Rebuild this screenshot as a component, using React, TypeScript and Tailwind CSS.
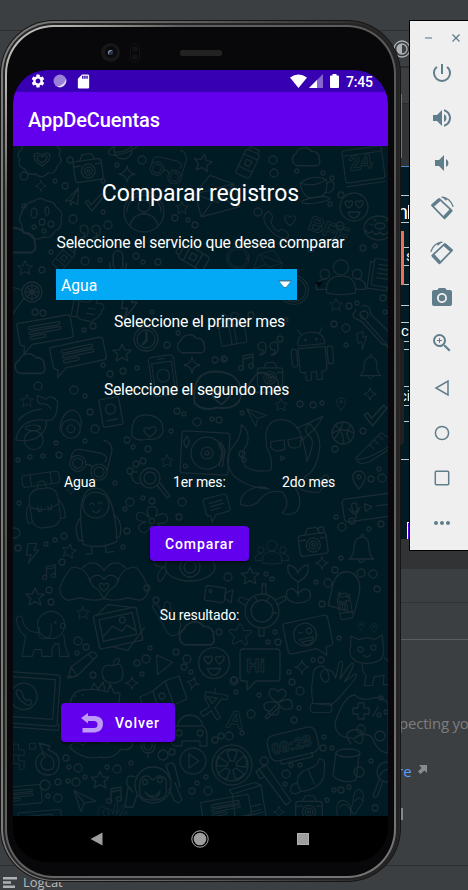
import React from 'react';
import { MdPowerSettingsNew, MdVolumeUp, MdVolumeDown, MdCameraAlt, MdZoomIn, MdMoreHoriz, MdSettings, MdSdCard } from 'react-icons/md';

const shapes: Record<string, React.ReactNode> = {
  star: <path d="M0-9 2.6-3.2 9-2.8 4.2 1.6 5.8 8 0 4.6-5.8 8-4.2 1.6-9-2.8-2.6-3.2Z" />,
  sparkle: <path d="M0-8Q1-1 8 0 1 1 0 8-1 1-8 0-1-1 0-8Z" />,
  heart: <path d="M0 6C-10-1-6-8 0-3 6-8 10-1 0 6Z" />,
  badge: <><path d="M-12-16q6-6 12 0 8-5 12 2 8 2 5 10 5 7-2 11-1 8-9 7-6 7-12 1-9 2-11-5-8-2-5-10-5-6 2-9-1-7 8-7Z" /><path d="M0 7C-13-1-8-10 0-4 8-10 13-1 0 7Z" /><path d="M0 4C-8-1-5-6 0-2 5-6 8-1 0 4Z" /></>,
  camera: <><rect x="-14" y="-9" width="28" height="21" rx="3" /><path d="M-7-9l3-6h9l3 6M-14-4h7M8-4h6" /><circle cy="2" r="7" /><circle cy="2" r="4" /><circle cy="2" r="1.5" /></>,
  planet: <><circle r="9" /><path d="M-8-4C-22 4-12 8 2 3S20-9 8-7M-7 2Q0 3 8-3" /></>,
  glasses: <><circle cx="-8" cy="3" r="8" /><circle cx="14" cy="10" r="8" /><circle cx="-8" cy="3" r="5" /><circle cx="14" cy="10" r="5" /><path d="M0 4q4-2 7 2M-15-2q0-9 8-9l22 2q8 3 4 8M22 7l3-20q-2-9-9-9" /></>,
  plane: <path d="M-9 2 8-10 4 8-1 4-4 8-3 2ZM8-10-3 3" />,
  bigplane: <path d="M-12-9 14-1 2 3 0 13ZM-12-9 2 3" />,
  check: <path d="M-9 0l3-2 3 5L7-8l3 2-12 15Z" />,
  cookie: <><path d="M-8-18q7-5 12 0 8 0 10 6 8 5 5 12 2 9-6 12-4 8-12 6-8 5-13-2-9-2-8-10-5-6 0-12 0-9 12-12Z" /><ellipse cx="-8" cy="-6" rx="3" ry="5" /><ellipse cx="5" cy="-8" rx="2" ry="4" /><circle cy="3" r="3" /><circle cx="9" cy="5" r="3" /><circle cx="-8" cy="8" r="2" /><circle cx="2" cy="12" r="2" /></>,
  person: <><circle r="20" /><circle cy="-6" r="6" /><path d="M-14 13C-10-2 10-2 14 13M-17 0a17 17 0 0 1 34 0" /></>,
  envelope: <><path d="M-22-7 20-7 20 18-22 18ZM-22-7-1 8 20-7M-22 18-6 5M20 18 4 5M-20-9-2-22 18-8" /></>,
  quotes: <><path d="M-2-2a4 4 0 1 0-3 4q0 4-4 5 8 0 7-9ZM10-2a4 4 0 1 0-3 4q0 4-4 5 8 0 7-9Z" /></>,
  cloud: <path d="M-9 7a6 6 0 0 1-1-11A8 8 0 0 1 4-6a6 6 0 0 1 7 7 4 4 0 0 1-2 6Z" />,
  wheel: <><circle r="10" /><circle r="7" /><circle r="2" /><path d="M0-7V7M-7 0H7M-5-5 5 5M5-5-5 5M-10-2-24-6M-8 6-22 26" /></>,
  thumb: <path d="M-11-6h8q7-1 6-9 6-1 5 8h7q5 4 0 7 2 4-2 6 0 4-4 5 0 4-6 3H-6l-5-3ZM-11-6h-6v18h6M0 0h8M0 6h8" />,
  note: <><path d="M-26-11H24q3 0 3 3V9q0 3-3 3H-15l-10 8 2-8q-4 0-4-4V-8q0-3 1-3Z" /><rect x="-16" y="-6" width="32" height="3" rx="1.5" /><rect x="-16" y="-1" width="32" height="3" rx="1.5" /><rect x="-16" y="4" width="16" height="3" rx="1.5" /></>,
  chat: <><path d="M-12-10h22q3 0 3 3V7q0 3-3 3H-4l-6 7v-7q-4 0-4-4V-8Z" /><path d="M-8-4H7M-8 0H7M-8 4H2" /></>,
  clock: <><circle r="12" /><circle r="9" /><path d="M0-7V1l-4 4M1-7V2l-4 4" /></>,
  phone: <><rect x="-14" y="-20" width="28" height="44" rx="4" /><rect x="-11" y="-13" width="22" height="30" /><path d="M-4-17h8" /><circle r="7" cy="2" /></>,
  can: <><rect x="-8" y="-13" width="16" height="28" rx="3" /><path d="M-8-7H8M-8 7H8M-5-13v-4H5v4" /><rect x="-3" y="-3" width="6" height="6" /></>,
  calendar: <><rect x="-22" y="-22" width="44" height="36" rx="3" /><path d="M-22-16h44M-22 18h44" /></>,
  cup: <><path d="M-14-6q14-8 28 0 0 16-9 17H-4q-9-1-10-17ZM14-2q9-4 7 4t-10 5M-14-6q14 7 28 0" /><ellipse cy="14" rx="15" ry="3" /></>,
  smile: <><circle r="14" /><path d="M-5 1C-12-4-8-8-5-5-2-9 1-4-5 1ZM5 1C-1-4 2-8 5-5 9-9 12-4 5 1ZM-6 5H6Q4 11 0 11T-6 5Z" /></>,
  call: <path d="M-12-14q-8 5 1 17t20 12q5-3 1-7-6-5-9-1-8-3-9-12 4-3 0-8-2-3-4-1Z" />,
  donut: <><ellipse rx="15" ry="12" /><ellipse cx="1" cy="-2" rx="5" ry="3" /><path d="M-14 2q4 5 7 1 4 6 8 1 4 5 8 0 3 1 5-3M-9-4l3 1M-5-9l2 2M7-7l2-2M10-1h3" /></>,
  people: <><circle cy="-10" r="8" /><circle cx="-17" cy="-3" r="5" /><circle cx="17" cy="-3" r="5" /><path d="M-15 17Q-17-1 0-1T15 17Q0 20-15 17ZM-16 13h-10q-1-10 10-11M16 13h10q1-10-10-11" /></>,
  book: <><rect x="-10" y="-14" width="22" height="30" rx="2" /><path d="M-10-10h-4v30H8v-4M-5-8H7M-5-3H7M-5 2H7M-5 7H7" /></>,
  ring: <><circle r="16" /><circle r="13" /></>,
  android: <><path d="M-15-8Q-15-22 0-22T15-8ZM-15-5h30V19q0 3-3 3h-3v9h-6v-9h-6v9h-6v-9h-3q-3 0-3-3ZM-10-20l-4-6M10-20l4-6" /><rect x="-23" y="-5" width="6" height="20" rx="3" /><rect x="17" y="-5" width="6" height="20" rx="3" /><circle cx="-6" cy="-14" r="1" /><circle cx="6" cy="-14" r="1" /></>,
  guitar: <><path d="M-18-18q-6 6 0 9 5 1 8 5L8 16l4 1 4 8M-12-22q7-2 8 4 0 5 5 8L20 9M-14-14 15 19" /><circle cx="-10" cy="-13" r="4" /></>,
  music: <><path d="M-4 6V-6l10-2V4M-4-3l10-2" /><circle cx="-6" cy="6" r="2.4" /><circle cx="4" cy="4" r="2.4" /></>,
  bolt: <path d="M-5-10H4L1-3h5L-5 11-2 2h-5Z" />,
  bell: <path d="M-12 9q5-3 5-12Q-6-13 1-13T8-3Q8 6 13 9ZM-3 9q3 7 7 0M0-13q0-4 3-2" />,
  gift: <><rect x="-16" y="-6" width="32" height="24" rx="2" /><path d="M-18-12h36v7h-36ZM-3-12v30M3-12v30M0-12q-14-2-10-8t10 8q2-12 9-8t-9 8" /></>,
  scooter: <><circle cx="-17" cy="16" r="10" /><circle cx="22" cy="4" r="10" /><circle cx="22" cy="4" r="4" /><path d="M-36 16Q-32-8-4-5-2 5-12 12-20 18-36 16ZM10 6Q12-14 24-16 34-12 33 1M-4-5q12 2 12-20M8-25q-8-8-12-2l-9-4q-2 8 4 9 7-1 10 5M-33-5q8-10 24-12" /><ellipse cx="-18" cy="3" rx="8" ry="3" /></>,
  card: <><rect x="-10" y="-14" width="20" height="28" rx="2" /><circle cy="-3" r="5" /><path d="M-5 8H5" /></>,
  helmet: <><path d="M-15 8q-2-22 15-21T16 4q-3 9-16 7-9 3-15-3Z" /><path d="M3 9C-6 3-4-3 2 1 8-5 14 1 3 9Z" /></>,
  turntable: <><rect x="-24" y="-21" width="48" height="42" rx="3" /><circle cx="2" r="16" /><circle cx="2" r="6" /><circle cx="2" r="2" /><path d="M15-12l5 8-2 17M13-10l4 7-2 15M-19-16l3 6-3 6-3-6Z" /><circle cx="-19" cy="14" r="2" /></>,
  backpack: <><rect x="-17" y="-16" width="34" height="46" rx="12" /><rect x="-22" y="-34" width="44" height="14" rx="4" /><path d="M-12-34v14M12-34v14M-5-16q-1-9 5-9t5 9M-17 4q17 10 34 0M-8 4v6h4V5M8 4v6h-4V5M-17 0q-7 5-5 22h5M17 0q7 5 5 22h-5" /></>,
  penguin: <><path d="M-16 25Q-20-30 0-30T18 25Q0 32-16 25Z" /><circle cy="-13" r="13" /><path d="M-6-14q2-3 4 0M2-14q2-3 4 0M-4-8q4 5 8 0M-16-2q-9 8-4 23h4M17-2q9 8 4 23h-4M-8 28v7h-6M6 28v7h8" /></>,
  magnifier: <><circle r="10" /><circle r="6" /><path d="M7 7 17 20l3-2L10 5M-13-6q-8-1-5 6t10 5" /><circle cx="-14" cy="-14" r="3" /><circle cx="-20" cy="-7" r="3" /><circle cx="-7" cy="-17" r="3" /></>,
  flower: <><path d="M-3-4q-6-12 3-12t4 11q11-7 13 1t-11 6q8 9 1 13T-1 5q-6 12-12 6t6-10q-13-1-10-8t14 3Z" /><circle r="3" /></>,
  hands: <><path d="M0-3q-7-9-15 0 0 7 9 12L0 18M0-3q7-9 15 0 0 7-9 12L0 18M-15 0q-5-17-20-16-9 10-13 22 0 12 9 14l14-3q12 5 25 1M15 0q5-17 20-16 9 10 13 22 0 12-9 14l-14-3q-12 5-25 1M-24-15q14-13 24 3M24-15Q10-28 0-12" /><path d="M0 10C-8 4-5-1 0 3 5-1 8 4 0 10Z" /></>,
  ufo: <><ellipse rx="25" ry="14" /><circle r="10" /><circle r="6" /><path d="M-24-4q-10-12-12-4t10 8q-8 5-6 12t9-8" /></>,
  video: <><rect x="-13" y="-8" width="20" height="15" rx="2" /><path d="M7-3l7-4V6L7 2Z" /><circle cx="-8" cy="-3" r="1.5" /></>,
  pin: <><path d="M0 9Q-8-1-6-5T0-9 6-5 0 9Z" /><circle cy="-3" r="2" /></>,
  octopus: <path d="M-19-8q-5-28 12-30t24 16q5 15 6 28 9-20 4-26-10-8-1-14 15 14 9 34-4 18-15 22 12 8 22-2 10 0-6 18-14 2-28-8 12 14 5 28-8 6-16 2 10-10 0-22-13-3-22 6-8 12-22 7 0-12 11-16 10-5 20 0-22-1-38-14-13-17 0-32 8-9 8-22 10 7 6 21-9 12-2 23 11 7 27 4 3-11-4-23ZM-15-15l14-2 1 10q-11 4-15-2ZM3-17l14-3-1 10q-8 4-12-1ZM16-15Q35-30 40-42 26-35 12-29M-5 0l5 2-4 3Z" />,
  ball: <><circle r="11" /><path d="M-11 0Q0-6 11 0M-8-8Q2 0 0 11M0-11Q-3 0-9 6M8-8Q0 2 8 8" /></>,
  shoe: <><path d="M-20 12 8-16q9 8 14 5l5 7L-6 17q-13 4-14-5ZM-18 14Q-7 14 26-6M-5-3l5 5M0-8l5 5M5-13l5 5" /></>,
  voice: <><rect x="-26" y="-11" width="60" height="23" rx="4" /><rect x="-17" y="-6" width="5" height="9" rx="2" /><path d="M-20-1q5 12 11 0M-14 5v4M-4-4v8l7-4ZM8 0h20" /></>,
  plant: <path d="M0-1Q-12-8-10-18-2-17 0-10 2-17 10-18 12-7 0-1ZM0-1v14M0 20q-14-1-11-12 5-6 11 3 7-9 12-2 3 10-12 11Z" />,
  ice: <><path d="M-15-8q3-14 15-13 13 3 12 22l-2 18-27-4ZM4-20q10 8 8 20" /><path d="M-9 0l4 2-4 2M3 1 0 3l3 2M-7 8q5 6 8 1M-5 11v6h5v-6" /></>,
  turtle: <><circle r="17" /><circle r="11" /><path d="M-16-5l-8-5 2-4 10 3M0-17v-10h4v10M13-11l10-4 1 4-9 5M-3 17v8h5v-8M-7-14l3 5M7-14 4-9M15 2H10" /></>,
  dog: <><circle cx="6" cy="-13" r="16" /><path d="M-7-11q-5 14 5 14T6-14M-9-4Q-26-4-28-22q-5-4-7 2 2 15 11 20l-4 24h12l2-8h9v8H7v-9l4-6h4l1 15h11l-5-14-1-12" /><circle cx="11" cy="-16" r="1" /><circle cx="20" cy="-12" r="3" /></>,
  picture: <><rect x="-22" y="-17" width="44" height="34" rx="2" /><rect x="-17" y="-12" width="34" height="22" /><path d="M-17 6-5-3 3 4 9-1 17 6M-18-17-5-25 22-16M-10 17 5 24 26 5" /><circle cx="6" cy="-7" r="3" /></>,
  peace: <path d="M-13 5q-7-13-13-22 3-6 8 0l7 14q-2-20 4-20t4 22Q7-3 9 3t-3 14Q-4 26-13 5Z" />,
  pencil: <path d="M-16 13l3-11L7-13q4-1 6 4L-7 11ZM-13 2l6 9M4-11l6 6M-16 13l3-2" />,
  apple: <path d="M0-7Q-12-10-12 1T0 12Q12 12 11 0T0-7Q0-15 7-15 8-8 0-7" />,
  play: <path d="M-6-10 12-2-5 12Z" />,
  laptop: <><rect x="-32" y="-28" width="58" height="54" rx="3" /><rect x="-37" y="-23" width="58" height="42" /><circle cx="-11" cy="-3" r="14" /><path d="M-18-9q-4 3 4 10t11 4q2-4-2-5l-3 1q-4-2-4-6Q-15-11-18-9ZM-32 30H28V23" /></>,
  map: <><path d="M-22 0-9-6 3-16 17-21 25 2 12 8-1 18-15 23ZM-9-6l7 22M3-16l9 24" /><circle cy="-1" r="3" /></>,
  dino: <path d="M-21 9Q-20-6-8-7q14-2 25 2l2-8 4 9 6 0-1 10 3 8M-16-1h1M-9-2h1M0-8l3-6 4 6 5-7 2 8" />,
  translate: <path d="M-13-14h25v5H6L0 2l8 9-3 4-8-9-8 8-4-4 9-8-7-9h6l3 5 5-7h-14ZM-3-20v6" />,
  car: <><path d="M-17 6q0-9 6-10 3-11 13-11T15-4q4 2 4 12v8h-7v-5h-18v5h-7l-4-3ZM-10-4h24" /><circle cx="-9" cy="3" r="3" /><circle cx="12" cy="3" r="3" /></>,
  whale: <path d="M-30-3q2-9 13-3 6-8 16-4t12 0q13-9 22 4-5 7-12 4-7 11-22 8-14 4-29-9Z" />,
  refresh: <path d="M-5-9l-4-9 11 3-2 4q12 3 11 14T0 14-12 5-6-8l3 4Q-8-1-7 4t7 5 6-6-5-8Z" />,
  orange: <><circle r="20" /><circle r="16" /><path d="M-2-4-5-13Q0-17 5-13L2-4ZM4-2 12-9Q16-4 14 2L5 1ZM4 3l8 6Q8 14 3 14L1 5ZM-2 5l-3 9q-7-1-9-6l8-5ZM-4-2l-9-6q-3 5-2 9l10 0Z" /></>,
  playc: <><circle r="13" /><path d="M-4-7 6 0-4 7Z" /></>,
  monkey: <><circle r="18" /><path d="M-13 4Q-15-10-5-9L0-5 5-9q10-1 8 11 3 13-13 13T-13 4ZM-8 7q8 9 15-1-2 8-7 7T-8 7ZM-18-8q-10-4-8 8l6 7M-25 3l-3 19h8l4-12M18-5l-5-15q7-5 9 2l5 20M22-2l7 17q-3 5-8 0l-5-11" /><circle cx="-8" cy="-3" r="2.5" /><circle cx="7" cy="-5" r="2.5" /></>,
  mic: <><rect x="-4" y="-11" width="8" height="16" rx="4" /><path d="M-7-1q0 9 7 9t7-9M0 8v5" /></>,
  starfish: <path d="M-2-11q3-2 5 8l10 0q2 3-7 7l2 10q-3 3-8-5l-9 5q-4-1 1-9l-7-7q0-4 9-1Z" />,
  chatsmile: <><path d="M-21-17H20q4 0 4 4V12q0 4-4 4h-4l-1 9-9-9H-20q-4 0-4-4V-13q0-4 3-4Z" /><circle r="12" cx="-3" cy="-1" /><path d="M-10 3H5q-2 7-7 7t-8-7M-9-4h4M-7 6H3" /><circle cx="2" cy="-4" r="3" /></>,
  bubble: <path d="M-17-16h34q3 0 3 3V13q0 3-3 3H-4l-9 9v-9h-4q-3 0-3-3V-13q0-3 3-3Z" />,
  hand: <path d="M-20 15q-3-16 0-29-1-9 6-12 10-3 12 13-3 8-8 1T-6-23q10 1 11 10l4-18q4-3 4 2L10-12q7-11 13-18 6-1-8 21l12-9q5 1-10 17Q10 9 0 17ZM-21 15h19q3 0 3 5t-3 5h-18q-3 0-3-5t2-5Z" />,
  cat: <><path d="M-18-9v-11l9 4q10-4 18 0l8-5 1 12q3 15-9 18-17 4-25-4-5-6-2-14ZM-5 10q-1 11 4 14l-2 11h9l2-10q8 0 11-2l-1 11h9V11L19 4" /><circle cx="-7" cy="-5" r="3" /><circle cx="7" cy="-7" r="3" /><path d="M-4 1q4 5 8 0" /></>,
  clover: <path d="M0 0Q-13-8-7-14-2-15 0-11 4-17 8-11 9-7 0 0 12-7 14 0t-4 6Q4 8 0 0q3 13-4 12-6 0-5-4-6-1-5-6 3-5 14-2ZM-2 2-13 14l2 2L2 3" />,
  gamepad: <><path d="M-26 5q9-28 20-28 8 7 18 3 9-2 15 5v50q-11-1-16-16-9-6-17 1-20 1-20-15Z" /><path d="M-3-15h6v5h5v6H3v5h-6v-5h-5v-6h5ZM12-2l5-9" /><circle cy="11" r="4" /><circle cx="19" cy="18" r="5" /></>,
  alarm: <><rect x="-25" y="-13" width="50" height="26" rx="7" /><path d="M-16 13v4h32v-4" /></>,
  mug: <><path d="M-12-14l-3 24q10 9 23 4l3-25" /><ellipse cy="-13" rx="12" ry="4" /><circle cx="11" cy="6" r="5" /><path d="M3-22q-9-12 2-14t10 8-9 2" /></>,
  croissant: <path d="M-20 15q-2-9 7-9-1-12 12-16 11-3 12-11 8-1 6 10 1 13-7 19T-9 15q-8 5-11 0ZM-13 6-9 15M-1-10 6 7M11-21" />,
  brush: <path d="M-15-18l7-4L17 14l-5 4ZM-15-18l-3 3 4 7 4-2M-10-20l-2-3" />,
  notebook: <><path d="M-22-12 10-22 16 16-18 20ZM-22-12l-3-5 28-8 7 3M-2 2 10-1M-12 14 12 8M-2 8 10 5" /></>,
  lolly: <><circle r="10" /><path d="M-7 4q2-8 14-7M-8 8-14 24q3 3 5-1l5-14" /></>,
  flip: <path d="M-18 20q-4-23 8-22 10 2 8 22ZM-16 8q7-10 12 0M8-16q9 2 5 17L4 15q-8-1-3-14 1-16 7-17ZM3-1q7-8 11 0" />,
  steps: <path d="M-20-9v-8h8v8h8v8h-8v8h8v12h-7v-8h-9V-1h8M4-18H12v8H4Z" />,
};

type Item = [string, number, number, number?, number?];
const items: Item[] = [
  ['badge', 42, 159], ['camera', 88, 169, 1, -8], ['planet', 123, 150], ['glasses', 164, 167, .85, 8], ['star', 203, 163, 1, 10], ['sparkle', 127, 174], ['sparkle', 41, 186, .7], ['plane', 73, 198, .9, -10], ['check', 94, 202], ['cookie', 42, 219], ['person', 144, 212], ['envelope', 217, 195, .95, -15], ['star', 182, 208, .7], ['quotes', 90, 231], ['cloud', 18, 242, 1.5], ['star', 25, 268, .8], ['wheel', 32, 292], ['thumb', 88, 308, .9, 10], ['note', 45, 330, 1, -10], ['note', 78, 353, 1, -12], ['clock', 146, 339], ['star', 122, 353], ['cloud', 192, 345, 1.1], ['cloud', 31, 365, 1.2], ['phone', 163, 374, .9, -8], ['sparkle', 192, 365], ['can', 64, 258, .8, 40], ['can', 193, 257, 1, -60], ['mic', 118, 264, 1.2], ['bolt', 130, 306, 1.2],
  ['can', 248, 163, .95, 25], ['cloud', 307, 158, 1.1], ['calendar', 364, 168, .9, -8], ['cup', 314, 187, .95, -8], ['smile', 354, 207], ['call', 278, 225, .9], ['heart', 290, 220, .9], ['donut', 379, 228], ['people', 341, 277, .95], ['book', 382, 272, .9, 8], ['ring', 294, 290, .9], ['android', 312, 352, .9, -5], ['guitar', 374, 328], ['quotes', 268, 348], ['music', 247, 362], ['star', 336, 305, .7], ['bolt', 363, 340, .8, -20], ['bell', 370, 368, .85], ['gift', 232, 330, .8, -10], ['ring', 238, 258, .7], ['envelope', 270, 263, .6, 20], ['camera', 270, 376, .9],
  ['star', 27, 401, .7], ['scooter', 50, 425, .95], ['card', 111, 412, 1, -10], ['helmet', 147, 428], ['turntable', 205, 453, 1, 3], ['glasses', 86, 461, 1, 5], ['backpack', 44, 502, .85, -8], ['penguin', 97, 518, 1, -5], ['magnifier', 150, 478], ['star', 167, 461, .7], ['flower', 152, 521, .9], ['chat', 217, 505, .9, -15], ['star', 69, 551, .8, 12], ['bolt', 33, 553, .95], ['music', 50, 572, .9], ['hands', 104, 582, .92], ['ufo', 190, 567], ['star', 35, 597], ['video', 218, 595, 1, 8], ['helmet', 217, 391, 1.5], ['cloud', 265, 384, 1.2],
  ['bigplane', 256, 416, .8], ['star', 281, 405, .7], ['sparkle', 370, 394, .8], ['pin', 341, 404, .7], ['octopus', 285, 456, .95], ['ball', 343, 433], ['shoe', 374, 447, .9], ['check', 375, 415, 1.2], ['pin', 359, 480], ['voice', 369, 507, 1, -8], ['camera', 313, 543, 1, -8], ['people', 272, 552, .65], ['bell', 361, 550], ['sparkle', 322, 563, .8], ['star', 250, 576], ['plant', 298, 583], ['ice', 347, 593, 1, 8], ['turtle', 262, 611], ['sparkle', 71, 490, .6],
  ['dog', 46, 636, .85], ['star', 83, 613, .7], ['picture', 118, 628, 1, -12], ['peace', 173, 620, .8], ['pencil', 84, 665], ['apple', 113, 672, .9], ['play', 162, 664, .9], ['smile', 214, 663, 1.1], ['laptop', 34, 700, .95, 4], ['sparkle', 132, 683, .8], ['sparkle', 193, 683, .8, 15], ['map', 162, 697], ['dino', 91, 697], ['translate', 215, 706, .9, 10], ['car', 188, 730], ['whale', 100, 751], ['refresh', 48, 761], ['orange', 232, 765], ['playc', 193, 761], ['star', 100, 780], ['bigplane', 83, 800, .9, 10], ['monkey', 153, 785], ['mic', 148, 745], ['music', 115, 795], ['steps', 27, 756, .7], ['note', 20, 795, .8, -5], ['note', 40, 820, .8, -5], ['note', 226, 808, .9, -10], ['cloud', 198, 635, 1.4], ['hand', 110, 822, .6],
  ['starfish', 241, 633, .8], ['chatsmile', 308, 635, .95, -12], ['bubble', 260, 665], ['sparkle', 302, 667, .9], ['hand', 331, 690, .9], ['cat', 367, 654, .9], ['clover', 278, 703], ['gamepad', 361, 718], ['alarm', 293, 744, 1, -14], ['mug', 348, 766], ['croissant', 309, 778, .9], ['brush', 274, 787], ['notebook', 252, 805, .9], ['lolly', 387, 772], ['flip', 352, 802, .8], ['camera', 309, 810, .95], ['sparkle', 279, 812, .7], ['pin', 361, 626, .5], ['pin', 374, 628, .5], ['can', 345, 607, .8, -10],
];

const dots: [number, number, number][] = [
  [70, 160, 3], [24, 176, 4], [55, 181, 2], [65, 186, 3], [103, 181, 2], [142, 160, 4], [117, 165, 2], [73, 219, 4], [108, 225, 4], [103, 212, 2], [175, 218, 3], [188, 220, 2], [195, 225, 3], [24, 206, 2], [42, 270, 3], [51, 252, 2], [85, 261, 4], [100, 260, 2], [136, 256, 3], [143, 262, 2], [158, 262, 3], [35, 312, 3], [43, 313, 3], [84, 330, 2], [93, 326, 3], [152, 312, 2], [167, 345, 3], [178, 333, 2], [103, 365, 2], [110, 374, 3], [123, 371, 3], [137, 368, 2], [215, 360, 3], [225, 359, 2],
  [273, 160, 4], [274, 173, 4], [297, 171, 2], [258, 212, 4], [332, 178, 2], [323, 173, 2], [330, 204, 2], [340, 226, 4], [334, 240, 2], [363, 248, 3], [375, 246, 2], [341, 195, 3], [311, 249, 3], [383, 298, 3], [357, 303, 2], [349, 306, 3], [334, 324, 3], [346, 328, 4], [385, 312, 2], [280, 339, 3], [224, 359, 3], [251, 315, 3], [286, 320, 2], [346, 345, 2],
  [38, 386, 4], [74, 390, 4], [85, 396, 2], [90, 412, 3], [95, 429, 4], [56, 443, 2], [59, 455, 3], [43, 456, 2], [30, 457, 2], [18, 460, 2], [85, 441, 2], [127, 440, 3], [133, 447, 2], [148, 449, 3], [171, 431, 2], [177, 411, 3], [184, 414, 2], [197, 422, 4], [212, 419, 2], [219, 420, 3], [115, 483, 2], [130, 502, 4], [125, 509, 2], [143, 498, 2], [152, 501, 3], [182, 502, 4], [179, 517, 3], [127, 531, 3], [123, 547, 2], [64, 536, 3], [55, 540, 2], [46, 544, 2], [62, 562, 3], [18, 548, 3], [19, 503, 2], [49, 590, 3], [51, 602, 3], [147, 588, 3], [156, 600, 3], [228, 577, 4], [15, 533, 5],
  [300, 404, 3], [313, 405, 3], [322, 403, 2], [242, 413, 2], [242, 454, 3], [244, 460, 2], [335, 449, 3], [363, 431, 3], [379, 469, 2], [371, 479, 3], [382, 478, 4], [336, 517, 2], [342, 527, 4], [352, 521, 3], [369, 529, 2], [381, 524, 3], [321, 530, 3], [341, 558, 2], [335, 570, 3], [361, 573, 4], [373, 574, 4], [266, 574, 2], [272, 579, 2], [316, 582, 2], [328, 583, 4], [377, 589, 3],
  [78, 641, 4], [77, 653, 2], [86, 647, 3], [137, 663, 3], [146, 659, 4], [150, 648, 2], [176, 652, 3], [187, 659, 4], [184, 667, 3], [191, 672, 2], [219, 632, 3], [93, 675, 3], [142, 674, 2], [234, 681, 4], [66, 758, 3], [69, 767, 2], [78, 768, 4], [85, 777, 2], [45, 785, 5], [58, 782, 3], [68, 781, 2], [76, 782, 4], [117, 769, 4], [107, 767, 2], [131, 763, 2], [163, 755, 5], [172, 752, 3], [197, 783, 2], [208, 791, 4], [206, 777, 2], [58, 798, 4], [48, 796, 2], [215, 740, 3], [221, 736, 3], [229, 736, 4], [192, 791, 3],
  [234, 680, 3], [236, 692, 2], [251, 714, 4], [242, 733, 2], [259, 695, 2], [289, 672, 2], [292, 682, 3], [300, 691, 4], [299, 708, 2], [294, 720, 3], [324, 737, 2], [323, 748, 3], [332, 748, 2], [371, 761, 2], [264, 761, 4], [291, 765, 2], [300, 765, 2], [286, 774, 4], [285, 784, 2], [327, 800, 2], [334, 790, 2], [341, 790, 3], [349, 787, 2], [275, 632, 2], [268, 642, 2], [278, 642, 3], [322, 604, 3], [339, 638, 2], [381, 698, 2], [379, 715, 2], [386, 712, 2], [375, 808, 3], [313, 660, 2], [321, 660, 3],
];

function Wallpaper() {
  return (
    <svg className="absolute inset-0 h-full w-full" viewBox="13 146 375 670" fill="none" stroke="#1a2b33" strokeWidth="1.3" strokeLinejoin="round" strokeLinecap="round">
      {items.map(([n, x, y, s = 1, r = 0], i) => (
        <g key={i} transform={`translate(${x} ${y}) rotate(${r}) scale(${s})`}>{shapes[n]}</g>
      ))}
      {dots.map(([x, y, r], i) => <circle key={i} cx={x} cy={y} r={r} />)}
      <g fontFamily="Liberation Sans, Arial, sans-serif" fontWeight="700" strokeWidth="0.9" aria-hidden="true">
        <text x="350" y="171" fontSize="21" transform="rotate(-8 350 171)">24</text>
        <text x="246" y="672" fontSize="19">Hi</text>
        <text x="273" y="755" fontSize="16" transform="rotate(-14 273 755)">09:28</text>
        <text x="307" y="229" fontSize="21" transform="rotate(20 307 229)">BFF</text>
        <text x="225" y="727" fontSize="25" transform="rotate(8 225 727)">A</text>
      </g>
    </svg>
  );
}

function StatusBar() {
  return (
    <div className="flex h-[22px] items-center bg-[#3700b3] pl-[17px] pr-[15px] text-white">
      <MdSettings size={16} />
      <svg className="ml-[7px] h-[14px] w-[14px]" viewBox="0 0 14 14">
        <circle cx="7" cy="7" r="6.5" fill="#9b80d9" />
        <path d="M13 5A6.5 6.5 0 0 1 4 12.5Q11 12 13 5Z" fill="#e8e0f7" />
      </svg>
      <MdSdCard className="ml-[8px]" size={17} />
      <div className="flex-1" />
      <svg className="mr-[2px] h-[14px] w-[17px]" viewBox="0 0 17 14" fill="#fff"><path d="M0 3.5Q8.500-2.500 17 3.500L8.500 14Z" /></svg>
      <svg className="mr-[7px] h-[14px] w-[14px]" viewBox="0 0 14 14" fill="#fff"><path opacity=".4" d="M14 0V14H0Z" /><path d="M8 6V14H0Z" /></svg>
      <svg className="mr-[7px] h-[14px] w-[9px]" viewBox="0 0 9 14" fill="#fff"><path d="M2.500 0h4v1.500H8q1 0 1 1V13q0 1-1 1H1q-1 0-1-1V2.500q0-1 1-1h1.500Z" /></svg>
      <span className="w-[27px] pt-px text-[14px] font-medium leading-none tracking-[-0.2px]">7:45</span>
    </div>
  );
}

function Phone() {
  return (
    <div className="absolute left-0 top-[20px] h-[862px] w-[402px]">
      <div className="absolute right-[-2px] top-[318px] h-[107px] w-[4px] rounded-r-sm bg-[#202020]" />
      <div className="absolute right-0 top-[74px] h-[64px] w-px bg-[#707070]" />
      <div className="h-full w-[401px] rounded-[54px] bg-[#151515] p-px">
        <div className="h-full rounded-[53px] bg-[linear-gradient(to_right,#7c7c7c_0%,#5c5c5c_50%,#2a2a2a_92%)] p-[1.5px]">
          <div className="h-full rounded-[51px] bg-[#242424] py-[2px] pl-[2px] pr-[3px]">
            <div className="h-full rounded-[49px] bg-[linear-gradient(135deg,#c8c8c4_0%,#b0b0ac_5%,#606060_14%,#555_50%,#777_100%)] pb-[2px] pl-[2px] pr-[1.500px] pt-[2px]">
              <div className="flex h-full flex-col rounded-[47px] bg-[#08080a] pl-[6.5px] pr-[5.500px]">
                <div className="flex h-[43.5px] shrink-0 items-start pl-[88px] pt-[16px]">
                  <div className="flex h-[19px] w-[19px] items-center justify-center rounded-full bg-[#171718]">
                    <div className="flex h-[12px] w-[12px] items-center justify-center rounded-full bg-[#0b0b0e]">
                      <div className="h-[5px] w-[5px] rounded-full bg-[#26334d] shadow-[inset_1px_1px_0_#8a93a0]" />
                    </div>
                  </div>
                  <div className="ml-[10px] flex h-[20px] w-[10px] flex-col items-center justify-between rounded-full border border-[#141415] py-[2px]">
                    <div className="h-[6px] w-[6px] rounded-full bg-[#121213]" />
                    <div className="h-[6px] w-[6px] rounded-full bg-[#121213]" />
                  </div>
                  <div className="ml-[40px] mt-[7px] h-[6px] w-[42px] rounded-[2px] bg-[#222223]" />
                </div>
                <Screen />
              </div>
            </div>
          </div>
        </div>
      </div>
    </div>
  );
}

function Screen() {
  return (
    <div className="flex h-[792px] w-[375px] shrink-0 flex-col overflow-hidden rounded-[34px] bg-black text-white">
      <StatusBar />
      <header className="flex h-[54px] items-center bg-[#6200ee] pl-[15px] pt-[2px] text-[20px] font-medium tracking-[-0.1px]">AppDeCuentas</header>
      <main className="relative h-[670px] bg-[#001b24]">
        <Wallpaper />
        <div className="relative flex h-full flex-col whitespace-nowrap leading-none">
          <h1 className="mt-[35px] flex h-[24px] items-center justify-center text-[23px]">Comparar registros</h1>
          <p className="mt-[29px] flex h-[18px] items-center justify-center text-[15.700px] tracking-[-0.22px]">Seleccione el servicio que desea comparar</p>
          <div className="mt-[17px] flex h-[31px] items-center pl-[43px]">
            <div className="flex h-full w-[241px] items-center justify-between bg-[#03a9f4] pl-[5px] pr-[5px] text-[15.700px]">
              <span className="pt-[2px]">Agua</span>
              <svg className="h-[9px] w-[14px]" viewBox="0 0 14 9"><path d="M0 0H14L8 8H6Z" fill="#327ca8" /><path d="M1.500 1.500H12.500L8 7H6Z" fill="#fff" /></svg>
            </div>
            <svg className="ml-[18px] h-[5px] w-[8px]" viewBox="0 0 8 5"><path d="M0 0H8L4 5Z" fill="#02080e" /></svg>
          </div>
          <p className="mt-[12px] flex h-[20px] items-center justify-center pr-[2px] text-[15.700px] tracking-[-0.18px]">Seleccione el primer mes</p>
          <p className="mt-[48px] flex h-[20px] items-center justify-center pr-[8px] text-[15.700px] tracking-[-0.2px]">Seleccione el segundo mes</p>
          <div className="mt-[72px] flex h-[20px] items-center pl-[51px] text-[14px] tracking-[-0.15px]">
            <span className="w-[109px]">Agua</span><span className="w-[109px]">1er mes:</span><span>2do mes</span>
          </div>
          <button className="ml-[137px] mt-[34px] flex h-[35px] w-[99px] items-center justify-center rounded-[4px] bg-[#6200ee] text-[14px] font-medium tracking-[0.900px] shadow-[0_2px_3px_rgba(0,0,0,0.5)]">Comparar</button>
          <p className="mt-[44px] flex h-[20px] items-center justify-center pr-[2px] text-[14px] tracking-[-0.15px]">Su resultado:</p>
          <button className="ml-[48px] mt-[78px] flex h-[39px] w-[114px] items-center rounded-[4px] bg-[#6200ee] pl-[20px] text-[14px] font-medium tracking-[0.900px] shadow-[0_2px_3px_rgba(0,0,0,0.5)]">
            <svg className="mr-[12px] h-[20px] w-[22px]" viewBox="0 0 22 20" fill="#be99f8"><path d="M0 5 7 0V3H14Q22 3.500 22 11T14 19.500H1.500V15H13Q16.500 15 16.500 11.500T13 8H7V10.500Z" /></svg>
            Volver
          </button>
        </div>
      </main>
      <nav className="flex h-[46px] items-center pl-[77px]">
        <svg className="h-[14px] w-[13px]" viewBox="0 0 13 14" fill="#9e9e9e"><path d="M12.500.5V13.500L.5 7Z" /></svg>
        <svg className="ml-[88px] h-[18px] w-[18px]" viewBox="0 0 18 18"><circle cx="9" cy="9" r="8.200" fill="none" stroke="#aaa" /><circle cx="9" cy="9" r="6.300" fill="#9e9e9e" /></svg>
        <div className="ml-[88px] h-[12px] w-[12px] border border-[#b0b0b0] bg-[#9e9e9e]" />
      </nav>
    </div>
  );
}

function RotateIcon({ flip = false }: { flip?: boolean }) {
  return (
    <svg className={flip ? 'h-6 w-6 -scale-x-100' : 'h-6 w-6'} viewBox="0 0 24 24" fill="none" stroke="#607d8b">
      <path d="M1.900 9.300 9.300 2.800 21.800 14.600 14.500 22.400Z" strokeWidth="1.700" strokeLinejoin="round" />
      <path d="M2.500 9.800 9.300 3.800M14.300 21.400 20.900 14.400" strokeWidth="3.400" />
      <path d="M11.500 1.200Q20 1.500 23.200 10.800M12.800 1l3.700 3.200" strokeWidth="1.300" />
    </svg>
  );
}

function Toolbar() {
  const icons = [
    <MdPowerSettingsNew size={24} />, <MdVolumeUp size={24} />, <MdVolumeDown size={24} />, <RotateIcon />, <RotateIcon flip />,
    <MdCameraAlt size={24} />, <MdZoomIn size={24} />,
    <svg className="h-6 w-6" viewBox="0 0 24 24" fill="none" stroke="currentColor" strokeWidth="1.500"><path d="M18 5V19L6 12Z" /></svg>,
    <svg className="h-6 w-6" viewBox="0 0 24 24" fill="none" stroke="currentColor" strokeWidth="1.500"><circle cx="12" cy="12" r="6.600" /></svg>,
    <svg className="h-6 w-6" viewBox="0 0 24 24" fill="none" stroke="currentColor" strokeWidth="1.500"><rect x="5.300" y="5.300" width="13.400" height="13.400" rx="1" /></svg>,
    <MdMoreHoriz size={24} />,
  ];
  return (
    <aside className="absolute left-[409px] top-[20px] flex h-[531px] w-[59px] flex-col border-y border-l border-black bg-[#efefef] pl-[20px] text-[#607d8b]">
      <div className="-ml-[5px] flex h-[34px] items-center justify-between pr-[8px]">
        <div className="h-[2px] w-[7px] bg-[#a0b0b8]" />
        <svg className="h-[8px] w-[8px]" viewBox="0 0 8 8" stroke="#607d8b" strokeWidth="1.300"><path d="M.5.5l7 7M7.500.5l-7 7" /></svg>
      </div>
      <div className="mt-[6px] flex flex-col gap-[21px]">
        {icons.map((icon, i) => <div key={i} className="h-6 w-6">{icon}</div>)}
      </div>
    </aside>
  );
}

function PreviewStrip() {
  const lines = [29, 27, 25, 18, 19, 21, 17, 19, 8, 37, 19, 16, 38];
  return (
    <div className="relative h-[373px] overflow-hidden border-t border-[#4a88c7] bg-[#001b24]">
      {lines.map((h, i) => <div key={i} className="border-b border-[#c4c9cc]" style={{ height: h }} />)}
      <div className="absolute left-[400px] top-[64px] h-[54px] w-[4px] bg-[#e5735d]" />
      <span className="absolute left-[397px] top-[30px] text-[20px] text-white">n</span>
      <div className="absolute left-[408px] top-[38px] h-[14px] w-px bg-white" />
      <span className="absolute left-[406px] top-[78px] text-[15px] text-white">s</span>
      <span className="absolute left-[401px] top-[153px] text-[15px] text-white">c</span>
      <span className="absolute left-[399px] top-[218px] text-[15px] text-white">ci</span>
      <div className="absolute bottom-0 left-[407px] h-[17px] w-[8px] border-l border-t border-white bg-[#6200ee]" />
    </div>
  );
}

export default function App() {
  return (
    <div className="relative h-[890px] w-[468px] overflow-hidden bg-[#3c3f41] font-[Roboto,sans-serif]">
      <div className="flex h-full flex-col">
        <div className="h-[31px] border-b border-[#2e2e2e]" />
        <div className="flex h-[37px] items-center border-b-2 border-[#2c2c2c] pl-[393px]">
          <svg className="h-[18px] w-[18px]" viewBox="0 0 18 18"><circle cx="9" cy="9" r="8" fill="none" stroke="#afb1b3" strokeWidth="1.300" /><circle cx="9" cy="9" r="5" fill="none" stroke="#afb1b3" strokeWidth="1.300" /><path d="M9 4a5 5 0 0 0 0 10Z" fill="#afb1b3" /></svg>
        </div>
        <div className="h-[36px] border-b border-[#2b2b2b]" />
        <div className="h-[62px] bg-[#313335]" />
        <PreviewStrip />
        <div className="h-[30px] bg-[#313335]" />
        <div className="h-[34px] border-b border-[#303234]" />
        <div className="h-[37px] border-b border-[#5a5d5f]" />
        <div className="flex h-[226px] flex-col whitespace-nowrap border-b border-[#2d2f30] pt-[71px] font-['Open_Sans',sans-serif] leading-6">
          <p className="pl-[399px] text-[15px] tracking-[-0.2px] text-[#7b7d7f]">pecting yo</p>
          <div className="mt-[24px] flex items-center pl-[397px]">
            <span className="text-[15px] text-[#589df6]">re</span>
            <svg className="mb-[4px] ml-[6px] h-[9px] w-[9px]" viewBox="0 0 9 9"><path d="M1 0H9V8L6.500 5.500 2.500 9 0 6.500 3.500 3Z" fill="#878b90" /></svg>
          </div>
          <div className="ml-[401px] mt-[25px] h-[12px] w-[2px] bg-[#85878a]" />
        </div>
        <div className="flex flex-1 items-center pl-[3px] pt-[9px] font-['Open_Sans',sans-serif]">
          <svg className="mr-[6px] h-[11px] w-[14px]" viewBox="0 0 14 11" fill="#afb1b3"><path d="M0 0H14V2.500H0ZM0 4.200H8V6.700H0ZM0 8.500H12V11H0Z" /></svg>
          <span className="text-[13px] leading-none text-[#b7b9bb]">Logcat</span>
        </div>
      </div>
      <Phone />
      <Toolbar />
    </div>
  );
}
